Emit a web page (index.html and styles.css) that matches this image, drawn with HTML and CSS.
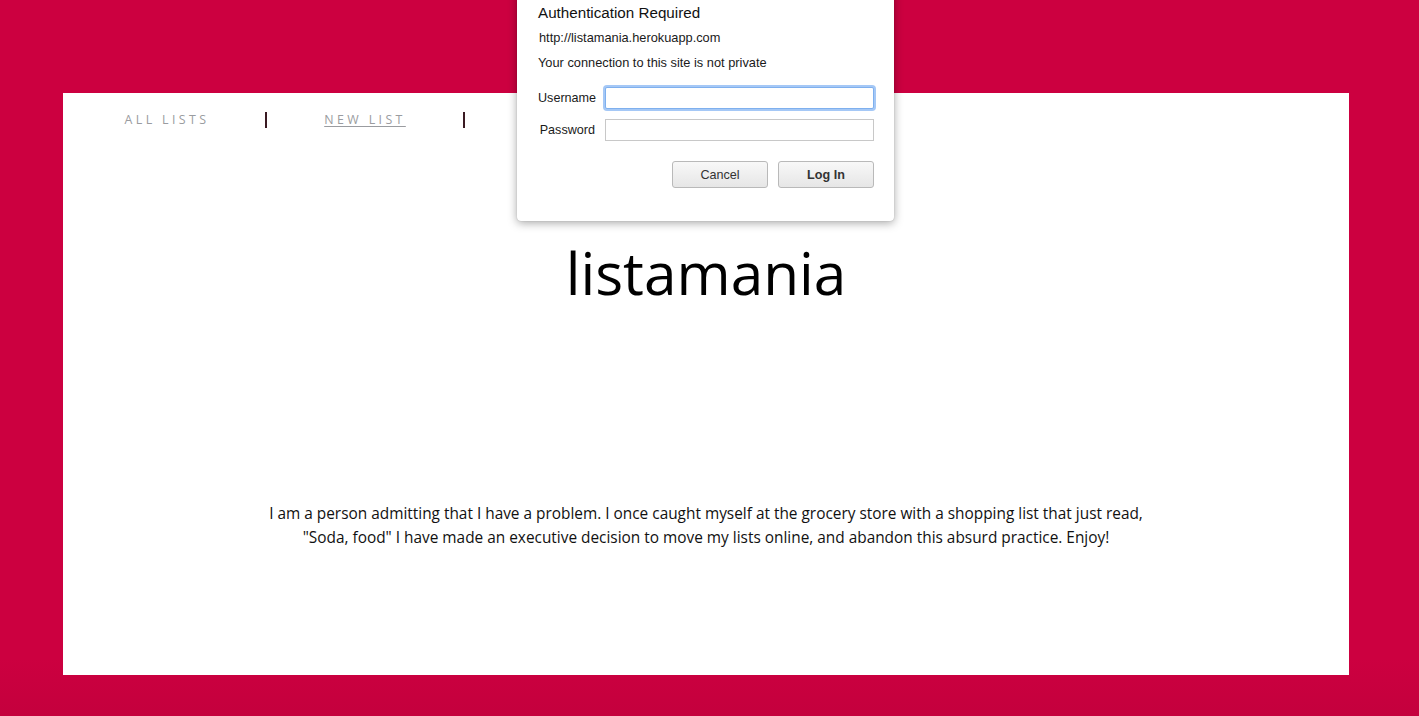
FILE: index.html
```html
<!DOCTYPE html>
<html>
<head>
<meta charset="utf-8">
<title>listamania</title>
<link rel="stylesheet" href="styles.css">
</head>
<body>
<div class="frame">
  <main class="page">
    <nav class="nav">
      <a class="nav-item" href="#">All Lists</a>
      <a class="nav-item nav-item--active" href="#">New List</a>
    </nav>
    <h1 class="title">listamania</h1>
    <p class="intro">I am a person admitting that I have a problem. I once caught myself at the grocery store with a shopping list that just read, "Soda, food" I have made an executive decision to move my lists online, and abandon this absurd practice. Enjoy!</p>
  </main>
</div>

<div class="auth-dialog">
  <div class="auth-title">Authentication Required</div>
  <div class="auth-url">http://listamania.herokuapp.com</div>
  <div class="auth-note">Your connection to this site is not private</div>
  <div class="auth-form">
    <label class="auth-label">Username</label>
    <div class="auth-input auth-input--focus"></div>
    <label class="auth-label">Password</label>
    <div class="auth-input"></div>
  </div>
  <div class="auth-buttons">
    <button class="auth-btn">Cancel</button>
    <button class="auth-btn auth-btn--primary">Log In</button>
  </div>
</div>
</body>
</html>
```

FILE: styles.css
```css
html, body {
  margin: 0;
  padding: 0;
  height: 100%;
}

body {
  background: linear-gradient(to bottom, #cc0040 0%, #cc0040 92%, #c4003d 100%);
  font-family: "Open Sans", sans-serif;
  overflow: hidden;
}

.frame {
  padding: 93px 70px 41px 63px;
  height: 716px;
  box-sizing: border-box;
}

.page {
  background: #ffffff;
  height: 582px;
  box-sizing: border-box;
  padding-top: 19px;
  text-align: center;
}

.nav {
  display: flex;
  padding-left: 6px;
}

.nav-item {
  display: block;
  width: 196px;
  height: 16px;
  line-height: 16px;
  font-size: 12.4px;
  letter-spacing: 3.4px;
  text-transform: uppercase;
  color: #9a9ca0;
  text-decoration: none;
  border-right: 2px solid #3a1a22;
  text-align: center;
}

.nav-item--active {
  text-decoration: underline;
  text-underline-offset: 2px;
}

.title {
  margin: 104px 0 0 0;
  font-size: 58.5px;
  line-height: 80px;
  font-weight: 400;
  color: #000;
}

.intro {
  margin: 190px auto 0 auto;
  max-width: 900px;
  font-size: 15.4px;
  line-height: 24px;
  color: #111;
}

/* Auth dialog */
.auth-dialog {
  position: absolute;
  left: 517px;
  top: -10px;
  width: 377px;
  height: 231px;
  box-sizing: border-box;
  background: #ffffff;
  border-radius: 0 0 4px 4px;
  box-shadow: 0 2px 10px rgba(0, 0, 0, 0.35), 0 0 1px rgba(0, 0, 0, 0.3);
  font-family: "Liberation Sans", Arial, sans-serif;
  color: #1a1a1a;
  padding: 14px 20px 0 21px;
}

.auth-title {
  font-size: 15.2px;
  line-height: 18px;
  color: #111;
}

.auth-url {
  font-size: 12.8px;
  line-height: 15px;
  margin-top: 8px;
  padding-left: 1px;
}

.auth-note {
  font-size: 12.8px;
  line-height: 15px;
  margin-top: 10px;
}

.auth-form {
  display: grid;
  grid-template-columns: 57px 269px;
  column-gap: 10px;
  row-gap: 10px;
  margin-top: 17px;
  align-items: center;
}

.auth-label {
  font-size: 12.6px;
  text-align: right;
}

.auth-input {
  height: 22px;
  box-sizing: border-box;
  border: 1px solid #c8c8c8;
  background: #fff;
}

.auth-input--focus {
  border: 1px solid #7fb0ee;
  box-shadow: 0 0 0 2px #a5c8f6;
  border-radius: 2px;
}

.auth-buttons {
  display: flex;
  justify-content: flex-end;
  gap: 10px;
  margin-top: 20px;
}

.auth-btn {
  width: 96px;
  height: 27px;
  box-sizing: border-box;
  border: 1px solid #b9b9b9;
  border-radius: 3px;
  background: linear-gradient(to bottom, #f8f8f8, #e6e6e6);
  font-family: "Liberation Sans", Arial, sans-serif;
  font-size: 12.6px;
  color: #333;
  padding: 0;
}

.auth-btn--primary {
  font-weight: bold;
}
```
